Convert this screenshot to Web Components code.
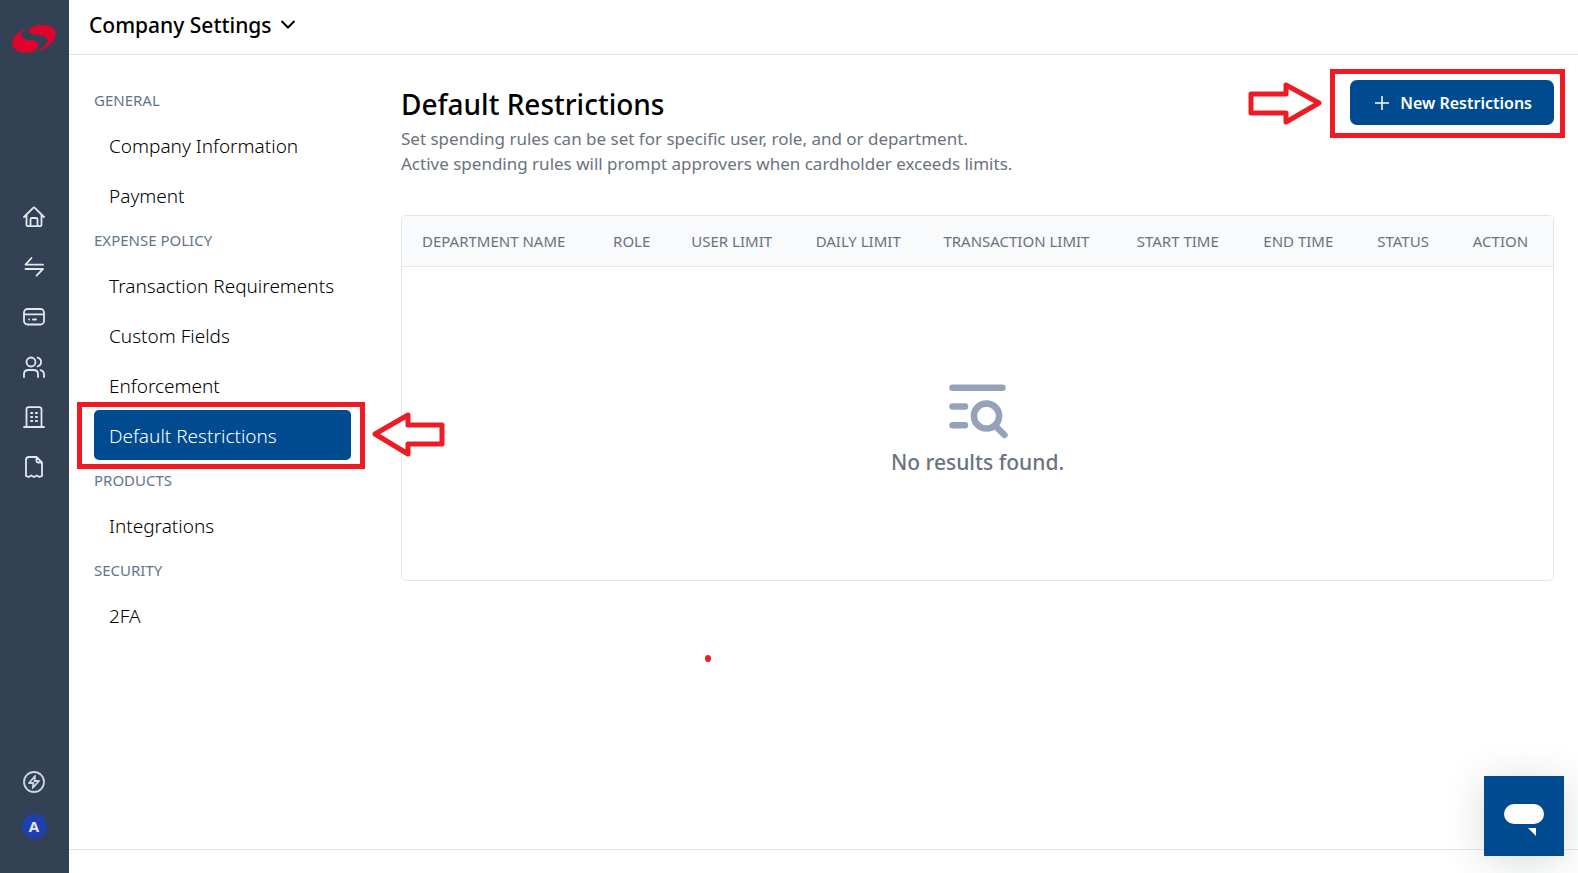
<!DOCTYPE html>
<html lang="en">
<head>
<meta charset="utf-8">
<title>Company Settings</title>
<style>
    html, body {
        margin: 0;
        height: 100%;
    }
    body {
        background: white;
        color: #111827;
        font-family: 'Noto Sans', 'Open Sans', sans-serif;
    }
</style>
</head>
<body>

<settings-app>
    <side-rail slot="rail"></side-rail>

    <settings-nav slot="nav">
        <nav-section heading="General">
            <nav-item>Company Information</nav-item>
            <nav-item>Payment</nav-item>
        </nav-section>
        <nav-section heading="Expense Policy">
            <nav-item>Transaction Requirements</nav-item>
            <nav-item>Custom Fields</nav-item>
            <nav-item>Enforcement</nav-item>
            <nav-item active>Default Restrictions</nav-item>
        </nav-section>
        <nav-section heading="Products">
            <nav-item>Integrations</nav-item>
        </nav-section>
        <nav-section heading="Security">
            <nav-item>2FA</nav-item>
        </nav-section>
    </settings-nav>

    <page-heading heading="Default Restrictions">
        <span slot="text">Set spending rules can be set for specific user, role, and or department.<br>Active spending rules will prompt approvers when cardholder exceeds limits.</span>
        <new-button slot="action">New Restrictions</new-button>
    </page-heading>
    <restrictions-table></restrictions-table>
</settings-app>
<chat-launcher></chat-launcher>

<script>
// ╔══════════════════════════════════════════════════════════╗
// ║                          HELPERS                         ║
// ╚══════════════════════════════════════════════════════════╝
function define(name, html, setup) {
    const template = document.createElement('template');
    template.innerHTML = html;

    customElements.define(name, class extends HTMLElement {
        constructor() {
            super();
            this.attachShadow({ mode: "open" });
            this.shadowRoot.appendChild(template.content.cloneNode(true));
            if (setup) {
                setup(this, this.shadowRoot);
            }
        }
    });
}


// ╔══════════════════════════════════════════════════════════╗
// ║                        APP LAYOUT                        ║
// ╚══════════════════════════════════════════════════════════╝
define("settings-app", /* html */`
    <style>
        :host {
            display: flex;
            min-height: 100vh;
        }
        #page {
            display: flex;
            flex-direction: column;
            flex: 1;
            min-width: 0;
        }
        header {
            display: flex;
            align-items: center;
            box-sizing: border-box;
            height: 55px;
            padding: 0 20px 4px;
            border-bottom: 1px solid #E2E8F0;
        }
        header button {
            display: flex;
            align-items: center;
            gap: 8px;
            padding: 0;
            border: 0;
            background: none;
            color: black;
            font-family: inherit;
            font-size: 21px;
            font-weight: 500;
        }
        #columns {
            display: flex;
            flex: 1;
        }
        main {
            flex: 1;
            min-width: 0;
            padding: 25px 24px 24px 50px;
            position: relative;
        }
        footer {
            height: 23px;
            border-top: 1px solid #E5E7EB;
        }
        /* pen mark left on the page */
        #dot {
            position: absolute;
            left: 354px;
            top: 600px;
            width: 6px;
            height: 7px;
            border-radius: 50%;
            background: #ED1C24;
        }
    </style>
    <slot name="rail"></slot>
    <div id="page">
        <header>
            <button type="button">Company Settings
                <svg width="16" height="16" viewBox="0 0 16 16" fill="none" stroke="currentColor" stroke-width="2"><path d="M1.500 4 8 10.500l6.500-6.500"/></svg>
            </button>
        </header>
        <div id="columns">
            <slot name="nav"></slot>
            <main>
                <slot></slot>
                <div id="dot"></div>
            </main>
        </div>
        <footer></footer>
    </div>
`);


// ╔══════════════════════════════════════════════════════════╗
// ║                        SIDE RAIL                         ║
// ╚══════════════════════════════════════════════════════════╝
define("side-rail", /* html */`
    <style>
        :host {
            display: flex;
            flex-direction: column;
            align-items: center;
            box-sizing: border-box;
            flex: none;
            width: 69px;
            padding: 25px 1px 34px 0;
            background: #334155;
            color: #E2E8F0;
        }
        a {
            display: flex;
            color: inherit;
        }
        nav {
            display: flex;
            flex-direction: column;
            gap: 26px;
            padding-top: 152px;
        }
        svg {
            display: block;
        }
        .line {
            fill: none;
            stroke: currentColor;
            stroke-width: 1.800;
            stroke-linecap: round;
            stroke-linejoin: round;
        }
        #foot {
            display: flex;
            flex-direction: column;
            align-items: center;
            gap: 20px;
            margin-top: auto;
            color: #CBD5E1;
        }
        #avatar {
            width: 25px;
            height: 25px;
            padding: 0;
            border: 0;
            border-radius: 50%;
            background: #1E40AF;
            color: #E2E8F0;
            font-family: inherit;
            font-size: 15px;
            font-weight: 700;
            line-height: 25px;
        }
        #bolt {
            padding: 0;
            border: 0;
            background: none;
            color: inherit;
        }
    </style>
    <a href="#" aria-label="Start">
        <svg width="44" height="28" viewBox="0 0 132 85" fill="#DF042E">
            <path d="M55 7C22 15 0 36 0 54c0 20 20 31 45 31 20 0 34-13 34-25 0-9-9-12-24-14C38 44 27 41 27 31c0-10 12-19 28-24Z"/>
            <path d="M51 17C58 5 75 0 91 0c25 0 41 10 41 25 0 27-31 51-62 57 22-11 37-24 37-36 0-10-12-13-27-15-19-2-31-4-29-14Z"/>
        </svg>
    </a>
    <nav aria-label="Main">
        <a href="#" aria-label="Home"><svg class="line" width="24" height="24" viewBox="0 0 24 24"><path d="M2 12 11.200 2.800a1.100 1.100 0 0 1 1.600 0L22 12M4.500 9.800v10.100c0 .7.500 1.200 1.200 1.200h12.600c.7 0 1.200-.500 1.200-1.200V9.800M8.500 21v-6.500c0-.8.600-1.500 1.500-1.500h4c.900 0 1.500.700 1.500 1.500V21"/></svg></a>
        <a href="#" aria-label="Transfers"><svg class="line" width="24" height="24" viewBox="0 0 24 24"><path d="M9.500 3 3.500 9.700h17.500M3.500 14h17.500l-6.500 6.700"/></svg></a>
        <a href="#" aria-label="Cards"><svg class="line" width="24" height="24" viewBox="0 0 24 24"><rect x="2" y="4" width="20" height="15.500" rx="3.500"/><path d="M2 9.300h20M7 14.500h.1M11 14.500h3"/></svg></a>
        <a href="#" aria-label="People"><svg class="line" width="24" height="24" viewBox="0 0 24 24"><circle cx="9" cy="7" r="4.500"/><path d="M2 22v-3c0-2.500 2-4 4.500-4h5c2.500 0 4.500 1.500 4.500 4v3M15.500 2.600a4.500 4.500 0 0 1 0 8.800M18.500 15.200c2.300.5 3.500 2 3.500 4.300V22"/></svg></a>
        <a href="#" aria-label="Company"><svg class="line" width="24" height="24" viewBox="0 0 24 24"><path d="M2 22h20M4.500 22V4.500c0-1.500.8-2.300 2.300-2.300h10.400c1.500 0 2.300.8 2.300 2.300V22M9 8h1.300M13.800 8h1.300M9 12h1.300M13.800 12h1.300M9 16h1.300M13.800 16h1.300"/></svg></a>
        <a href="#" aria-label="Receipts"><svg class="line" width="24" height="24" viewBox="0 0 24 24"><path d="M14.500 2H7C5 2 4 3 4 5v16l2.500 1 2.700-1.500 2.800 1.500 2.800-1.500 2.700 1.500 2.500-1V7.500ZM14.500 2v4c0 1 .5 1.500 1.500 1.500h4"/></svg></a>
    </nav>
    <div id="foot">
        <button id="bolt" type="button" aria-label="Quick actions"><svg class="line" width="24" height="24" viewBox="0 0 24 24"><circle cx="12" cy="12" r="10"/><path d="M13 6 7 13h4.500l-.800 5L17 11h-4.500Z"/></svg></button>
        <button id="avatar" type="button">A</button>
    </div>
`);


// ╔══════════════════════════════════════════════════════════╗
// ║                      SETTINGS NAV                        ║
// ╚══════════════════════════════════════════════════════════╝
define("settings-nav", /* html */`
    <style>
        :host {
            display: block;
            position: relative;
            z-index: 1;
            flex: none;
            width: 257px;
            padding: 25px 0 0 25px;
        }
    </style>
    <nav aria-label="Settings"><slot></slot></nav>
`);

define("nav-section", /* html */`
    <style>
        :host {
            display: block;
        }
        h2 {
            margin: 0;
            color: #64748B;
            font-size: 15px;
            font-weight: 400;
            line-height: 40px;
            text-transform: uppercase;
        }
    </style>
    <h2></h2>
    <slot></slot>
`, (host, root) => {
    root.querySelector("h2").textContent = host.getAttribute("heading");
});

define("nav-item", /* html */`
    <style>
        :host {
            display: block;
            position: relative;
        }
        a {
            display: block;
            padding: 2px 15px 0;
            border-radius: 5px;
            color: black;
            font-size: 19px;
            font-weight: 300;
            line-height: 48px;
            text-decoration: none;
            white-space: nowrap;
        }
        :host([active]) a {
            background: #004B8F;
            color: white;
        }

        /* callout round the active item */
        .callout {
            display: none;
        }
        :host([active]) .callout {
            display: block;
            position: absolute;
        }
        #frame {
            inset: -8px -14px -9px -17px;
            border: 5px solid #ED1C24;
        }
        #arrow {
            left: 278px;
            top: 1px;
        }
    </style>
    <a href="#"><slot></slot></a>
    <div class="callout" id="frame"></div>
    <svg class="callout" id="arrow" width="74" height="46" viewBox="0 0 74 46" fill="white" stroke="#ED1C24" stroke-width="5" stroke-linejoin="round"><path d="M3 23 36 4v10h34v19H36v10Z"/></svg>
`);


// ╔══════════════════════════════════════════════════════════╗
// ║                      PAGE HEADING                        ║
// ╚══════════════════════════════════════════════════════════╝
define("page-heading", /* html */`
    <style>
        :host {
            display: flex;
            justify-content: space-between;
            align-items: flex-start;
            padding-bottom: 39px;
        }
        h1 {
            margin: 0;
            padding-top: 3px;
            color: black;
            font-size: 28px;
            font-weight: 500;
            line-height: 43px;
        }
        p {
            margin: 0;
            color: #6B7280;
            font-size: 17px;
            line-height: 25px;
        }
    </style>
    <div>
        <h1></h1>
        <p><slot name="text"></slot></p>
    </div>
    <slot name="action"></slot>
`, (host, root) => {
    root.querySelector("h1").textContent = host.getAttribute("heading");
});

define("new-button", /* html */`
    <style>
        :host {
            display: block;
            position: relative;
        }
        button {
            display: flex;
            align-items: center;
            gap: 10px;
            height: 45px;
            padding: 0 22px 0 24px;
            border: 0;
            border-radius: 7px;
            background: #004B8F;
            color: white;
            font-family: inherit;
            font-size: 16px;
            font-weight: 600;
            white-space: nowrap;
        }

        /* callout round the button */
        #frame {
            position: absolute;
            inset: -11px -11px -13px -20px;
            border: 5px solid #ED1C24;
        }
        #arrow {
            position: absolute;
            right: 232px;
            top: 1px;
        }
    </style>
    <button type="button">
        <svg width="16" height="16" viewBox="0 0 16 16" fill="none" stroke="currentColor" stroke-width="1.500"><path d="M8 1v14M1 8h14"/></svg>
        <slot></slot>
    </button>
    <div id="frame"></div>
    <svg id="arrow" width="74" height="46" viewBox="0 0 74 46" fill="white" stroke="#ED1C24" stroke-width="5" stroke-linejoin="round"><path d="M71 22 38 4v9H3v19h35v9Z"/></svg>
`);


// ╔══════════════════════════════════════════════════════════╗
// ║                    RESTRICTIONS TABLE                    ║
// ╚══════════════════════════════════════════════════════════╝
define("restrictions-table", /* html */`
    <style>
        :host {
            display: block;
            overflow: hidden;
            border: 1px solid #E2E5EA;
            border-radius: 5px;
        }
        table {
            width: 100%;
            border-collapse: collapse;
            table-layout: fixed;
        }
        th {
            height: 50px;
            padding: 0 0 0 20px;
            border-bottom: 1px solid #E2E5EA;
            background: #F8FAFC;
            color: #6B7280;
            font-size: 15px;
            font-weight: 400;
            text-align: left;
            text-transform: uppercase;
            white-space: nowrap;
        }
        td {
            height: 299px;
            padding: 14px 0 0;
            color: #6B7280;
            font-size: 21px;
            font-weight: 500;
            line-height: 32px;
            text-align: center;
        }
        svg {
            display: block;
            margin: 0 auto 7px;
        }
    </style>
    <table>
        <colgroup>
            <col style="width: 16.6%"><col style="width: 6.8%"><col style="width: 10.8%">
            <col style="width: 11.1%"><col style="width: 16.8%"><col style="width: 11%">
            <col style="width: 9.9%"><col style="width: 8.3%"><col style="width: 8.7%">
        </colgroup>
        <thead>
            <tr>
                <th>Department Name</th><th>Role</th><th>User Limit</th>
                <th>Daily Limit</th><th>Transaction Limit</th><th>Start Time</th>
                <th>End Time</th><th>Status</th><th>Action</th>
            </tr>
        </thead>
        <tbody>
            <tr>
                <td colspan="9">
                    <svg width="60" height="55" viewBox="0 0 60 55" fill="none" stroke="#94A3B8" stroke-width="6.500" stroke-linecap="round"><path d="M4.500 3.800h50M4.500 22.500h12.500M4.500 41.200h12.500M48 42.500l8.500 8.500"/><circle cx="38.500" cy="32" r="12.600"/></svg>
                    No results found.
                </td>
            </tr>
        </tbody>
    </table>
`);


// ╔══════════════════════════════════════════════════════════╗
// ║                      CHAT LAUNCHER                       ║
// ╚══════════════════════════════════════════════════════════╝
define("chat-launcher", /* html */`
    <style>
        :host {
            display: block;
            position: fixed;
            right: 14px;
            bottom: 17px;
        }
        button {
            display: block;
            width: 80px;
            height: 80px;
            padding: 0;
            border: 0;
            background: #004B8F;
            box-shadow: 0 5px 40px rgb(0 40 30 / 0.16);
        }
        svg {
            display: block;
        }
    </style>
    <button type="button" aria-label="Open chat">
        <svg width="80" height="80" viewBox="0 0 80 80" fill="white"><rect x="20" y="28" width="40" height="20" rx="10"/><path d="M44 52h8v8Z"/></svg>
    </button>
`);
</script>
</body>
</html>
